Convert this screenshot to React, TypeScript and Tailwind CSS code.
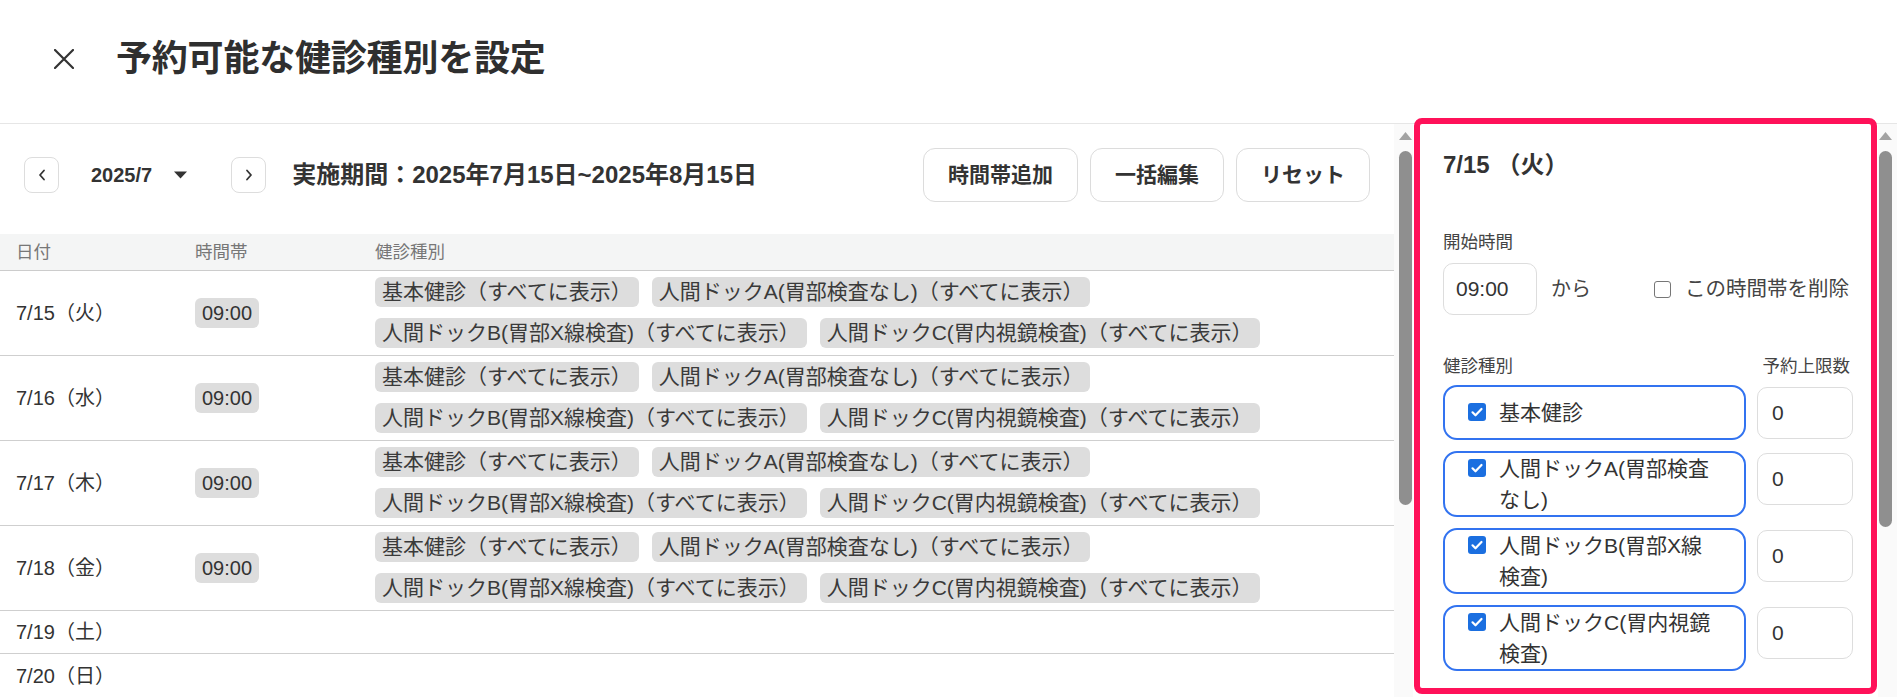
import React from 'react';

const tags = [
  '基本健診（すべてに表示）',
  '人間ドックA(胃部検査なし)（すべてに表示）',
  '人間ドックB(胃部X線検査)（すべてに表示）',
  '人間ドックC(胃内視鏡検査)（すべてに表示）',
];

const days = [
  { date: '7/15（火）', time: '09:00' },
  { date: '7/16（水）', time: '09:00' },
  { date: '7/17（木）', time: '09:00' },
  { date: '7/18（金）', time: '09:00' },
  { date: '7/19（土）' },
  { date: '7/20（日）' },
];

const examTypes = [
  '基本健診',
  '人間ドックA(胃部検査なし)',
  '人間ドックB(胃部X線検査)',
  '人間ドックC(胃内視鏡検査)',
];

function ScrollArrow() {
  return (
    <svg width="13" height="10" viewBox="0 0 13 10">
      <polygon points="6.5,1 13,9 0,9" fill="#a3a3a3" />
    </svg>
  );
}

function CheckedBox() {
  return (
    <span className="mt-[6px] flex h-[18px] w-[18px] shrink-0 items-center justify-center rounded-[3px] bg-[#1b6fe0]">
      <svg width="14" height="14" viewBox="0 0 14 14" fill="none">
        <path d="M2.5 7.3l3 3 6-6.3" stroke="#fff" strokeWidth={2.2} strokeLinecap="round" strokeLinejoin="round" />
      </svg>
    </span>
  );
}

export default function App() {
  return (
    <div className="relative h-[698px] w-full overflow-hidden bg-white font-['Liberation_Sans','Noto_Sans_CJK_JP',sans-serif] text-[#333]">
      {/* Header */}
      <div className="flex h-[124px] items-center gap-[42px] border-b border-[#e6e6e6] pb-[5px] pl-[54px]">
        <svg width="20" height="20" viewBox="0 0 20 20" fill="none">
          <path d="M1 1l18 18M19 1L1 19" stroke="#333" strokeWidth={2.2} strokeLinecap="round" />
        </svg>
        <h1 className="text-[36px] font-bold leading-none tracking-[-0.2px] text-[#2f2f2f]">予約可能な健診種別を設定</h1>
      </div>

      <div className="flex">
        {/* Left panel */}
        <div className="min-w-0 flex-1">
          <div className="mt-[24px] flex h-[54px] items-center px-[24px]">
            <button className="flex h-[36px] w-[35px] items-center justify-center rounded-lg border border-[#dddddd] bg-white">
              <svg width="8" height="12" viewBox="0 0 8 12" fill="none">
                <path d="M6 1.5L2 6l4 4.5" stroke="#333" strokeWidth={1.8} strokeLinecap="round" strokeLinejoin="round" />
              </svg>
            </button>
            <div className="ml-[32px] flex items-center gap-[22px]">
              <span className="text-[20px] font-bold text-[#333]">2025/7</span>
              <svg width="13" height="8" viewBox="0 0 13 8">
                <polygon points="0,0.5 13,0.5 6.5,7.5" fill="#333" />
              </svg>
            </div>
            <button className="ml-[44px] flex h-[36px] w-[35px] items-center justify-center rounded-lg border border-[#dddddd] bg-white">
              <svg width="8" height="12" viewBox="0 0 8 12" fill="none">
                <path d="M2 1.5L6 6l-4 4.5" stroke="#333" strokeWidth={1.8} strokeLinecap="round" strokeLinejoin="round" />
              </svg>
            </button>
            <span className="ml-[26px] text-[24px] font-bold text-[#333]">実施期間：2025年7月15日~2025年8月15日</span>
            <div className="ml-auto flex gap-[12px]">
              {['時間帯追加', '一括編集', 'リセット'].map((label) => (
                <button
                  key={label}
                  className="h-[54px] rounded-xl border border-[#dcdcdc] bg-white px-[24px] text-[21px] font-bold text-[#333]"
                >
                  {label}
                </button>
              ))}
            </div>
          </div>

          {/* Table */}
          <div className="mt-[32px]">
            <div className="grid h-[37px] grid-cols-[179px_180px_1fr] items-center border-b border-[#cccccc] bg-[#f4f5f5] pl-4 text-[17.5px] text-[#777]">
              <span>日付</span>
              <span>時間帯</span>
              <span>健診種別</span>
            </div>
            {days.map((d, i) =>
              d.time ? (
                <div
                  key={d.date}
                  className="grid grid-cols-[179px_180px_1fr] items-center border-b border-[#cfcfcf] pb-[7px] pl-4 pt-[6px]"
                >
                  <span className="text-[20px] text-[#333]">{d.date}</span>
                  <span>
                    <span className="inline-block h-[30px] rounded-md bg-[#dddddd] px-[7px] text-[20px] leading-[30px] text-[#333]">
                      {d.time}
                    </span>
                  </span>
                  <div className="flex flex-wrap gap-x-[13px] gap-y-[11px]">
                    {tags.map((t) => (
                      <span
                        key={t}
                        className="h-[30px] rounded-md bg-[#dddddd] px-[7px] text-[21px] leading-[30px] text-[#3a3a3a]"
                      >
                        {t}
                      </span>
                    ))}
                  </div>
                </div>
              ) : (
                <div
                  key={d.date}
                  className={
                    i === days.length - 1
                      ? 'flex h-[43px] items-center pl-4 text-[20px] text-[#333]'
                      : 'flex h-[43px] items-center border-b border-[#cfcfcf] pl-4 text-[20px] text-[#333]'
                  }
                >
                  {d.date}
                </div>
              )
            )}
          </div>
        </div>

        {/* Left scrollbar */}
        <div className="flex w-[19px] flex-col bg-[#fafafa] pl-[5px] pt-[7px]">
          <ScrollArrow />
          <div className="mt-[10px] h-[354px] w-[13px] rounded-full bg-[#8f8f8f]" />
        </div>

        {/* Right panel */}
        <div className="relative w-[465px] pl-[30px] pr-[25px] pt-[25px]">
          <div className="text-[24px] font-bold leading-[32px] text-[#333]">7/15 （火）</div>

          <div className="mt-[49px] text-[17.5px] leading-[24px] text-[#444]">開始時間</div>
          <div className="mt-[9px] flex items-center">
            <div className="flex h-[52px] w-[94px] items-center rounded-[10px] border border-[#dddddd] pl-[12px] text-[21px] text-[#333]">
              09:00
            </div>
            <span className="ml-[14px] text-[20px] text-[#444]">から</span>
            <label className="ml-auto mr-[4px] flex items-center gap-[14px] text-[20.5px] text-[#444]">
              <span className="h-[17px] w-[17px] rounded-[3px] border-[1.5px] border-[#767676] bg-white" />
              この時間帯を削除
            </label>
          </div>

          <div className="mt-[39px] flex justify-between text-[17.5px] leading-[24px] text-[#444]">
            <span>健診種別</span>
            <span className="mr-[3px]">予約上限数</span>
          </div>

          <div className="mt-[7px] flex flex-col gap-[11px]">
            {examTypes.map((name) => (
              <div key={name} className="flex items-start gap-[11px]">
                <div className="flex min-h-[55px] flex-1 items-center rounded-[14px] border-2 border-[#3273f0] pl-[23px] pr-[29px]">
                  <div className="flex items-start gap-[13px]">
                    <CheckedBox />
                    <span className="text-[21px] leading-[31px] text-[#333]">{name}</span>
                  </div>
                </div>
                <div className="mt-[2px] flex h-[52px] w-[96px] items-center rounded-[10px] border border-[#dddddd] pl-[14px] text-[21px] text-[#333]">
                  0
                </div>
              </div>
            ))}
          </div>
          <div className="mt-[22px] h-px bg-[#dddddd]" />

          {/* highlight frame */}
          <div className="pointer-events-none absolute left-[1px] top-[-6px] h-[576px] w-[463px] rounded-[8px] border-[6px] border-[#ff1159]" />
        </div>

        {/* Right scrollbar */}
        <div className="flex w-[19px] flex-col bg-[#fafafa] pl-[1px] pt-[7px]">
          <ScrollArrow />
          <div className="mt-[10px] h-[376px] w-[13px] rounded-full bg-[#8f8f8f]" />
        </div>
      </div>
    </div>
  );
}
